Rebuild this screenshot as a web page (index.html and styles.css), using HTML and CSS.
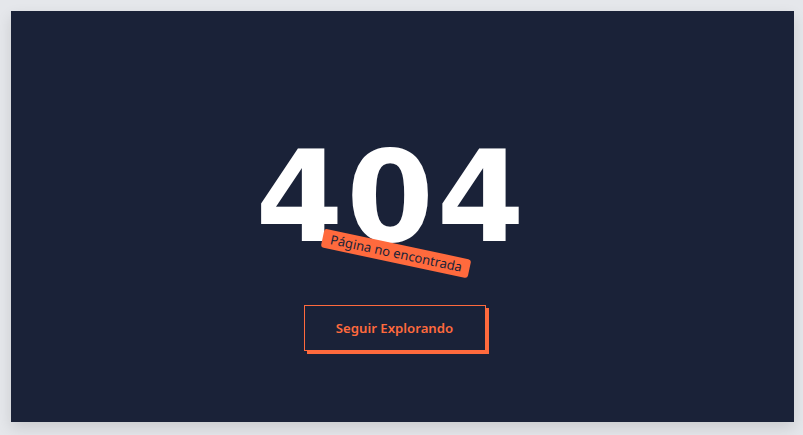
FILE: index.html
```html
<!DOCTYPE html>
<html lang="es">
<head>
<meta charset="utf-8">
<link rel="stylesheet" href="styles.css">
<title>404</title>
</head>
<body>
<main class="panel">
  <div class="code-wrap">
    <h1 class="code">404</h1>
    <div class="badge">Página no encontrada</div>
  </div>
  <a class="btn" href="#">Seguir Explorando</a>
</main>
</body>
</html>
```
FILE: styles.css
```css
html, body {
  margin: 0;
  padding: 0;
}
body {
  background: #e5e7eb;
  padding: 11px 9px 13px 11px;
  font-family: "Noto Sans", "DejaVu Sans", sans-serif;
}
.panel {
  height: 411px;
  background: #1a2238;
  box-shadow: 0 6px 14px rgba(0, 0, 0, 0.12);
  display: flex;
  flex-direction: column;
  align-items: center;
  padding-top: 124px;
  padding-right: 16px;
  box-sizing: border-box;
}
.code-wrap {
  position: relative;
  padding-right: 6px;
}
.code {
  margin: 0;
  font-family: "DejaVu Sans", sans-serif;
  font-weight: 900;
  font-size: 126px;
  line-height: 126px;
  letter-spacing: 3px;
  color: #ffffff;
}
.badge {
  position: absolute;
  left: 66px;
  top: 109px;
  background: #ff6a3d;
  color: #1a2238;
  font-size: 13px;
  line-height: 19px;
  padding: 0 8px;
  border-radius: 3px;
  transform: rotate(12deg);
  white-space: nowrap;
}
.btn {
  margin-top: 44px;
  display: flex;
  align-items: center;
  justify-content: center;
  width: 182px;
  height: 46px;
  box-sizing: border-box;
  border: 1px solid #ff6a3d;
  box-shadow: 3px 3px 0 0 #ff6a3d;
  color: #ff6a3d;
  font-size: 13.2px;
  font-weight: 600;
  text-decoration: none;
}
```
